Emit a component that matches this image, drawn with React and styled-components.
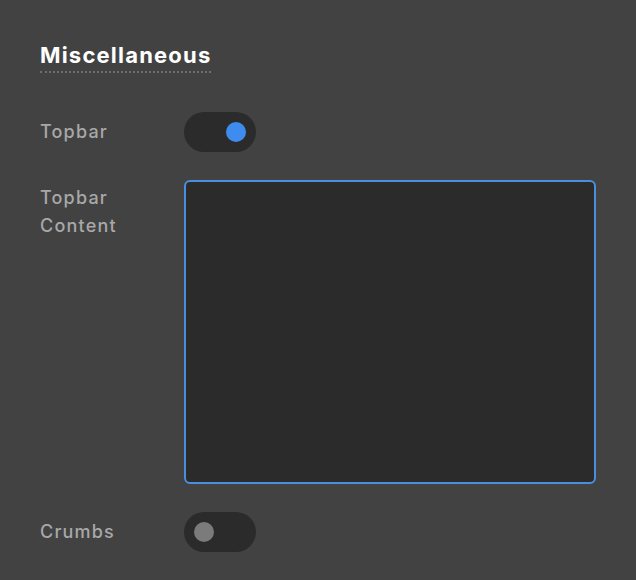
import React, { useState } from 'react';
import styled, { createGlobalStyle } from 'styled-components';

const Global = createGlobalStyle`
    html, body {
        margin: 0;
        background: #424242;
    }
    body {
        font-family: Inter, "Noto Sans", sans-serif;
    }
`;

const Panel = styled.div`
    padding: 40px 40px 28px;
    background: #424242;
    min-height: 580px;
    box-sizing: border-box;
`;

const Heading = styled.h2`
    display: inline-block;
    margin: 0 0 39px;
    font-size: 22px;
    font-weight: 700;
    line-height: 31px;
    letter-spacing: 1.2px;
    color: #ffffff;
    border-bottom: 2px dotted #6e6e6e;
`;

const Form = styled.div`
    display: flex;
    flex-direction: column;
    gap: 28px;
`;

const Row = styled.div`
    display: grid;
    grid-template-columns: 144px 1fr;
    align-items: ${p => (p.top ? 'start' : 'center')};
`;

const Label = styled.label`
    font-size: 18px;
    font-weight: 500;
    line-height: 28px;
    color: #a8a8a8;
    letter-spacing: 1.2px;
    padding-top: ${p => (p.top ? '4px' : '0')};
`;

const Track = styled.button`
    width: 72px;
    height: 40px;
    border: none;
    border-radius: 20px;
    background: #2b2b2b;
    padding: 0 10px;
    display: flex;
    align-items: center;
    justify-content: ${p => (p.on ? 'flex-end' : 'flex-start')};
    cursor: pointer;
`;

const Knob = styled.span`
    width: 20px;
    height: 20px;
    border-radius: 50%;
    background: ${p => (p.on ? '#3f8cf0' : '#7b7b7b')};
`;

const TextArea = styled.textarea`
    display: block;
    width: 100%;
    height: 304px;
    box-sizing: border-box;
    resize: none;
    background: #2b2b2b;
    border: 2px solid #4a8ee0;
    border-radius: 6px;
    color: #e0e0e0;
    font: 16px Inter, sans-serif;
    padding: 10px;
    outline: none;
`;

function Toggle({ initial }) {
    const [on, setOn] = useState(initial);
    return (
        <Track on={on ? 1 : 0} onClick={() => setOn(!on)}>
            <Knob on={on ? 1 : 0} />
        </Track>
    );
}

export default function App() {
    return (
        <Panel>
            <Global />
            <Heading>Miscellaneous</Heading>
            <Form>
                <Row>
                    <Label>Topbar</Label>
                    <Toggle initial={true} />
                </Row>
                <Row top>
                    <Label top>Topbar<br />Content</Label>
                    <TextArea />
                </Row>
                <Row>
                    <Label>Crumbs</Label>
                    <Toggle initial={false} />
                </Row>
            </Form>
        </Panel>
    );
}
